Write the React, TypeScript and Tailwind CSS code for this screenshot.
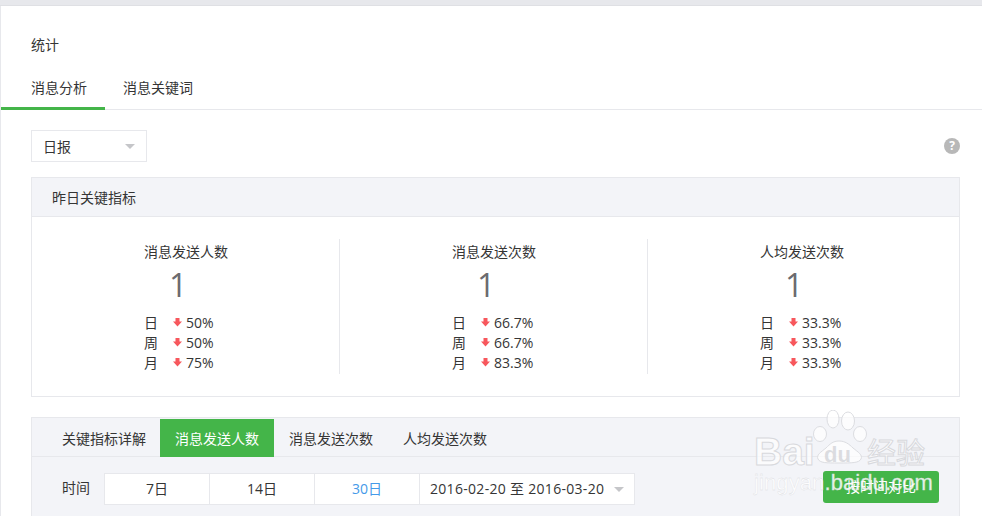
const FONT = "font-['Open_Sans','Noto_Sans_CJK_SC',sans-serif]";

const metrics = [
  {
    title: "消息发送人数",
    rows: [
      ["日", "50%"],
      ["周", "50%"],
      ["月", "75%"],
    ],
  },
  {
    title: "消息发送次数",
    rows: [
      ["日", "66.7%"],
      ["周", "66.7%"],
      ["月", "83.3%"],
    ],
  },
  {
    title: "人均发送次数",
    rows: [
      ["日", "33.3%"],
      ["周", "33.3%"],
      ["月", "33.3%"],
    ],
  },
];

function DownArrow() {
  return (
    <svg width="9" height="10" viewBox="0 0 9 10" className="mr-[4px]">
      <path d="M2.5 1h4v3.5H9L4.5 9.5 0 4.5h2.5z" fill="#f7575c" />
    </svg>
  );
}

function Caret({ className }: { className: string }) {
  return (
    <span
      className={`h-0 w-0 border-x-[5px] border-t-[5px] border-x-transparent border-t-[#c5c6c9] ${className}`}
    />
  );
}

function Metric({ title, rows, last }: { title: string; rows: string[][]; last: boolean }) {
  return (
    <div className={`h-[135px] w-[308px] pl-[112px] ${last ? "" : "border-r border-[#e7e8ec]"}`}>
      <div className="h-[27px] text-[14px] leading-[25px] text-[#353535]">{title}</div>
      <div className="ml-[25px] h-[40px] text-[32px] leading-[38px] text-[#6b6b6f]">1</div>
      <div className="mt-[6px]">
        {rows.map(([label, value]) => (
          <div key={label} className="flex h-[20px] items-center text-[14px] text-[#353535]">
            <span className="w-[29px]">{label}</span>
            <DownArrow />
            <span>{value}</span>
          </div>
        ))}
      </div>
    </div>
  );
}

function Watermark() {
  return (
    <div className="pointer-events-none absolute left-[754px] top-[408px] h-[90px] w-[228px]">
      <svg width="54" height="55" viewBox="0 0 54 55" className="absolute left-[59px] top-[2px]" fill="#ffffff" fillOpacity="0.7" stroke="#dcdde1" strokeWidth="1">
        <ellipse cx="7" cy="24" rx="6.5" ry="7.5" />
        <ellipse cx="20" cy="9" rx="6" ry="9" />
        <ellipse cx="35" cy="11" rx="6.5" ry="9" />
        <ellipse cx="47" cy="24" rx="6.5" ry="7.5" />
        <path d="M26 31c-6 0-9 3-13 7-5 4-10 7-8 11 2 4 8 4 21 4s20 0 22-4c2-4-3-7-8-11-4-4-8-7-14-7z" />
      </svg>
      <span className="absolute left-0 top-[22px] font-['Liberation_Sans',sans-serif] text-[39px] leading-[44px] font-bold text-white/70 [-webkit-text-stroke:1px_#d8d9dd]">
        Bai
      </span>
      <span className="absolute left-[70px] top-[34px] font-['Liberation_Sans',sans-serif] text-[22px] leading-[26px] font-bold text-[#d3d4d8]/80">
        du
      </span>
      <span className="absolute left-[113px] top-[23px] font-['Noto_Sans_CJK_SC',sans-serif] text-[29px] leading-[40px] text-white/70 [-webkit-text-stroke:1px_#d8d9dd]">
        经验
      </span>
      <span className="absolute left-0 top-[62px] font-['Liberation_Sans',sans-serif] text-[22px] leading-[26px] tracking-[0.1px] text-white/85 [-webkit-text-stroke:0.3px_#d8d9dd]">
        jingyan.baidu.com
      </span>
    </div>
  );
}

export default function App() {
  return (
    <div className={`relative h-[516px] w-[982px] overflow-hidden bg-white ${FONT}`}>
      <div className="h-[6px] border-b border-[#dfe0e4] bg-[#e7e8ec]" />
      <div className="h-[510px] border-l border-[#e7e8ec]">
        <h2 className="pl-[30px] pt-[29px] text-[14px] leading-[20px] font-normal text-[#353535]">统计</h2>
        <div className="mt-[17px] flex h-[38px] border-b border-[#e7e8ec] text-[14px] text-[#353535]">
          <div className="h-[38px] w-[104px] border-b-[3px] border-[#44b549] pl-[30px] leading-[32px]">消息分析</div>
          <div className="pl-[18px] leading-[32px]">消息关键词</div>
        </div>

        <div className="px-[30px]">
          <div className="mt-[20px] flex w-[929px] items-center justify-between">
            <div className="flex h-[32px] w-[116px] items-center justify-between border border-[#e7e8ec] pl-[11px] pr-[10px] text-[14px] text-[#353535]">
              <span>日报</span>
              <Caret className="mr-px" />
            </div>
            <div className="flex h-[16px] w-[16px] items-center justify-center rounded-full bg-[#b8b8b8] text-[12px] leading-none font-bold text-white">
              ?
            </div>
          </div>

          <section className="mt-[15px] w-[929px] border border-[#e7e8ec]">
            <div className="h-[39px] border-b border-[#e7e8ec] bg-[#f3f4f8] pl-[20px] text-[14px] leading-[39px] text-[#353535]">
              昨日关键指标
            </div>
            <div className="flex h-[179px] pt-[22px]">
              {metrics.map((m, i) => (
                <Metric key={m.title} title={m.title} rows={m.rows} last={i === 2} />
              ))}
            </div>
          </section>

          <section className="mt-[20px] h-[110px] w-[929px] border border-[#e7e8ec] bg-[#f3f4f8]">
            <div className="flex h-[39px] border-b border-[#e7e8ec] pl-[15px] text-[14px] text-[#353535]">
              <div className="pl-[15px] pr-[14px] leading-[41px]">关键指标详解</div>
              <div className="mt-px h-[38px] w-[114px] bg-[#44b549] text-center leading-[39px] text-white">消息发送人数</div>
              <div className="px-[15px] leading-[41px]">消息发送次数</div>
              <div className="px-[15px] leading-[41px]">人均发送次数</div>
            </div>
            <div className="flex items-start pl-[30px] pt-[14px] text-[14px] text-[#353535]">
              <span className="w-[42px] leading-[33px]">时间</span>
              <div className="mt-[2px] flex h-[32px] w-[531px] border border-[#e7e8ec] bg-white leading-[30px]">
                <div className="w-[105px] border-r border-[#e7e8ec] text-center">7日</div>
                <div className="w-[105px] border-r border-[#e7e8ec] text-center">14日</div>
                <div className="w-[105px] border-r border-[#e7e8ec] text-center text-[#459ae9]">30日</div>
                <div className="flex flex-1 items-center justify-between pl-[10px] pr-[10px]">
                  <span className="tracking-[0.3px]">2016-02-20 至 2016-03-20</span>
                  <Caret className="" />
                </div>
              </div>
              <button className="ml-[188px] h-[32px] w-[116px] rounded-[3px] bg-[#44b549] text-center text-[14px] leading-[32px] text-white">
                按时间对比
              </button>
            </div>
          </section>
        </div>
      </div>
      <Watermark />
    </div>
  );
}
